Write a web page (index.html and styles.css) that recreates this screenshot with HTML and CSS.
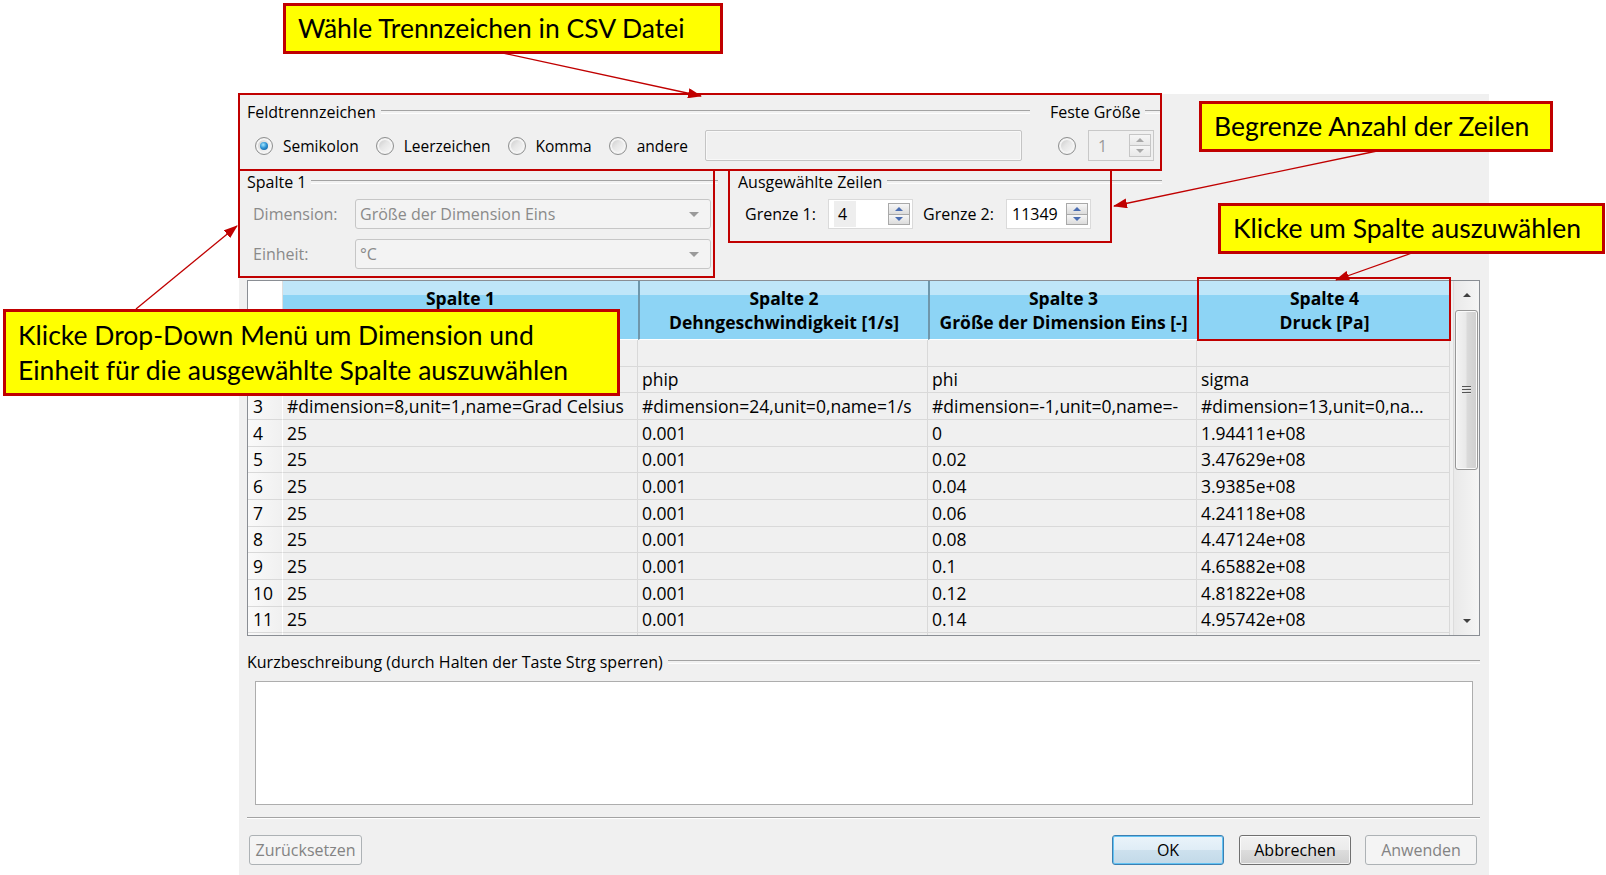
FILE: index.html
```html
<!DOCTYPE html>
<html lang="de">
<head>
<meta charset="utf-8">
<title>CSV Import</title>
<link rel="stylesheet" href="styles.css">
</head>
<body>
<div class="page">
  <div class="dialog">
    <div class="row1">
      <section class="group g-sep">
        <div class="gtitle"><span>Feldtrennzeichen</span></div>
        <div class="gbody">
          <span class="radio-item"><span class="radio checked"></span>Semikolon</span>
          <span class="radio-item"><span class="radio"></span>Leerzeichen</span>
          <span class="radio-item"><span class="radio"></span>Komma</span>
          <span class="radio-item"><span class="radio"></span>andere</span>
          <span class="lineedit"></span>
        </div>
      </section>
      <section class="group g-fixed">
        <div class="gtitle"><span>Feste Größe</span></div>
        <div class="gbody">
          <span class="radio"></span>
          <span class="spin spin-off"><span class="spin-val">1</span><span class="spin-btns"><span class="sbtn"><i class="tri-up"></i></span><span class="sbtn"><i class="tri-down"></i></span></span></span>
        </div>
      </section>
    </div>

    <div class="row2">
      <section class="group g-col">
        <div class="gtitle"><span>Spalte 1</span></div>
        <div class="form-row">
          <span class="flabel">Dimension:</span>
          <span class="combo"><span>Größe der Dimension Eins</span><i class="combo-arrow"></i></span>
        </div>
        <div class="form-row second">
          <span class="flabel">Einheit:</span>
          <span class="combo"><span>°C</span><i class="combo-arrow"></i></span>
        </div>
      </section>
      <section class="group g-rows">
        <div class="gtitle"><span>Ausgewählte Zeilen</span></div>
        <div class="form-row limits">
          <span class="glabel">Grenze 1:</span>
          <span class="spin"><span class="spin-val"><span class="sel">4</span></span><span class="spin-btns"><span class="sbtn"><i class="tri-up"></i></span><span class="sbtn"><i class="tri-down"></i></span></span></span>
          <span class="glabel second">Grenze 2:</span>
          <span class="spin"><span class="spin-val">11349</span><span class="spin-btns"><span class="sbtn"><i class="tri-up"></i></span><span class="sbtn"><i class="tri-down"></i></span></span></span>
        </div>
      </section>
    </div>

    <div class="table">
      <div class="grid">
        <div class="thead">
          <div class="corner"></div>
          <div class="th first"><span>Spalte 1</span><span class="blank"></span></div>
          <div class="th"><span>Spalte 2</span><span>Dehngeschwindigkeit [1/s]</span></div>
          <div class="th"><span>Spalte 3</span><span>Größe der Dimension Eins [-]</span></div>
          <div class="th"><span>Spalte 4</span><span>Druck [Pa]</span></div>
        </div>
        <div class="tbody">
          <div class="rh"></div><div class="td"></div><div class="td"></div><div class="td"></div><div class="td"></div>
          <div class="rh"></div><div class="td"></div><div class="td">phip</div><div class="td">phi</div><div class="td">sigma</div>
          <div class="rh">3</div><div class="td">#dimension=8,unit=1,name=Grad Celsius</div><div class="td">#dimension=24,unit=0,name=1/s</div><div class="td">#dimension=-1,unit=0,name=-</div><div class="td">#dimension=13,unit=0,na...</div>
          <div class="rh">4</div><div class="td">25</div><div class="td">0.001</div><div class="td">0</div><div class="td">1.94411e+08</div>
          <div class="rh">5</div><div class="td">25</div><div class="td">0.001</div><div class="td">0.02</div><div class="td">3.47629e+08</div>
          <div class="rh">6</div><div class="td">25</div><div class="td">0.001</div><div class="td">0.04</div><div class="td">3.9385e+08</div>
          <div class="rh">7</div><div class="td">25</div><div class="td">0.001</div><div class="td">0.06</div><div class="td">4.24118e+08</div>
          <div class="rh">8</div><div class="td">25</div><div class="td">0.001</div><div class="td">0.08</div><div class="td">4.47124e+08</div>
          <div class="rh">9</div><div class="td">25</div><div class="td">0.001</div><div class="td">0.1</div><div class="td">4.65882e+08</div>
          <div class="rh">10</div><div class="td">25</div><div class="td">0.001</div><div class="td">0.12</div><div class="td">4.81822e+08</div>
          <div class="rh">11</div><div class="td">25</div><div class="td">0.001</div><div class="td">0.14</div><div class="td">4.95742e+08</div>
          <div class="rh"></div><div class="td"></div><div class="td"></div><div class="td"></div><div class="td"></div>
        </div>
      </div>
      <div class="vscroll">
        <div class="sb-arrow"><i class="sb-up"></i></div>
        <div class="sb-thumb"><span class="grip"></span></div>
        <div class="sb-fill"></div>
        <div class="sb-arrow"><i class="sb-down"></i></div>
      </div>
    </div>

    <div class="gtitle desc-title"><span>Kurzbeschreibung (durch Halten der Taste Strg sperren)</span></div>
    <div class="textarea"></div>
    <div class="separator"></div>
    <div class="buttons">
      <button class="btn btn-off btn-reset">Zurücksetzen</button>
      <div class="spacer"></div>
      <button class="btn btn-default">OK</button>
      <button class="btn btn-cancel">Abbrechen</button>
      <button class="btn btn-off">Anwenden</button>
    </div>
  </div>

  <svg class="arrows" width="1606" height="875" viewBox="0 0 1606 875">
    <defs>
      <marker id="ah" markerUnits="userSpaceOnUse" markerWidth="14" markerHeight="10" refX="13" refY="5" orient="auto">
        <path d="M0,0 L14,5 L0,10 z" fill="#c00000"/>
      </marker>
    </defs>
    <line x1="503" y1="53" x2="701" y2="96" class="arrow-line" marker-end="url(#ah)"/>
    <line x1="1377" y1="151" x2="1114" y2="206" class="arrow-line" marker-end="url(#ah)"/>
    <line x1="1412" y1="253" x2="1336" y2="280" class="arrow-line" marker-end="url(#ah)"/>
    <line x1="136" y1="309" x2="237" y2="226" class="arrow-line" marker-end="url(#ah)"/>
  </svg>

  <div class="hl hl-a"></div>
  <div class="hl hl-b"></div>
  <div class="hl hl-c"></div>
  <div class="hl hl-d"></div>

  <div class="callout c1">Wähle Trennzeichen in CSV Datei</div>
  <div class="callout c2">Begrenze Anzahl der Zeilen</div>
  <div class="callout c3">Klicke um Spalte auszuwählen</div>
  <div class="callout c4">Klicke Drop-Down Menü um Dimension und<br>Einheit für die ausgewählte Spalte auszuwählen</div>
</div>
</body>
</html>
```

FILE: styles.css
```css
* { box-sizing: border-box; }
html, body { margin: 0; padding: 0; }
body {
  background: #fff;
  font-family: "Open Sans", "Noto Sans", sans-serif;
  font-size: 16px;
  color: #000;
}
.page {
  position: relative;
  width: 1606px;
  height: 875px;
  overflow: hidden;
  padding: 94px 0 0 239px;
}
.dialog {
  width: 1250px;
  height: 781px;
  background: #f0f0f0;
  padding: 8px 9px 0 8px;
  display: flex;
  flex-direction: column;
}

/* group boxes */
.gtitle {
  display: flex;
  align-items: center;
  height: 20px;
  line-height: 20px;
  white-space: nowrap;
}
.gtitle::after {
  content: "";
  flex: 1;
  height: 2px;
  margin-left: 5px;
  border-top: 1px solid #a3a3a3;
  border-bottom: 1px solid #fdfdfd;
}
.row1 { display: flex; gap: 20px; }
.g-sep { width: 783px; }
.g-fixed { width: 112px; }
.gbody {
  display: flex;
  align-items: center;
  height: 31px;
  margin-top: 8px;
  padding: 0 8px;
}
.radio-item {
  display: flex;
  align-items: center;
  gap: 10px;
  margin-right: 17px;
  white-space: nowrap;
  font-size: 15.5px;
}
.radio {
  flex: none;
  width: 18px;
  height: 18px;
  border-radius: 50%;
  border: 1px solid #8e8f8f;
  background: linear-gradient(135deg, #c4c4c4 0%, #e6e6e6 45%, #fbfbfb 100%);
  box-shadow: inset 0 0 0 2px #f4f4f4;
  display: flex;
  align-items: center;
  justify-content: center;
}
.radio.checked::after {
  content: "";
  width: 8px;
  height: 8px;
  border-radius: 50%;
  background: radial-gradient(circle at 40% 35%, #a6e8ff 0%, #2f95d6 45%, #0b4f8f 100%);
}
.g-fixed .radio { margin-right: 12px; }
.lineedit {
  flex: 1;
  height: 31px;
  border: 1px solid #c4c4c4;
  border-radius: 2px;
  background: #f0f0f0;
  box-shadow: inset 0 0 0 1px #f8f8f8;
}

/* spin boxes */
.spin {
  flex: none;
  display: flex;
  width: 85px;
  height: 30px;
  border: 1px solid #dadada;
  background: #fff;
}
.spin-val {
  flex: 1;
  display: flex;
  align-items: center;
  padding-left: 5px;
}
.spin-val .sel {
  background: #eeeeee;
  padding: 2px 9px 2px 4px;
}
.spin-btns {
  width: 22px;
  display: flex;
  flex-direction: column;
  margin: 3px 2px 3px 0;
}
.sbtn {
  flex: 1;
  display: flex;
  align-items: center;
  justify-content: center;
  border: 1px solid #a9a9a9;
  background: linear-gradient(#f7f7f7, #dcdcdc);
}
.sbtn + .sbtn { border-top: none; }
.tri-up {
  width: 0; height: 0;
  border-left: 4px solid transparent;
  border-right: 4px solid transparent;
  border-bottom: 4px solid #4a6db1;
}
.tri-down {
  width: 0; height: 0;
  border-left: 4px solid transparent;
  border-right: 4px solid transparent;
  border-top: 4px solid #4a6db1;
}
.spin-off {
  width: 66px;
  height: 31px;
  background: #f0f0f0;
  border-color: #c8c8c8;
  color: #9a9a9a;
}
.spin-off .spin-val { padding-left: 9px; }
.spin-off .sbtn { border-color: #c6c6c6; background: linear-gradient(#f6f6f6, #e8e8e8); }
.spin-off .tri-up { border-bottom-color: #a8a8a8; }
.spin-off .tri-down { border-top-color: #a8a8a8; }

/* row 2 */
.row2 { display: flex; gap: 20px; margin-top: 11px; }
.g-col { width: 471px; }
.g-rows { width: 424px; }
.form-row {
  display: flex;
  align-items: center;
  height: 30px;
  margin-top: 7px;
}
.form-row.second { margin-top: 10px; }
.g-col .form-row { padding: 0 7px 0 6px; }
.flabel { width: 102px; color: #8a8a8a; flex: none; }
.combo {
  flex: 1;
  height: 30px;
  display: flex;
  align-items: center;
  padding-left: 4px;
  border: 1px solid #c6c6c6;
  border-radius: 3px;
  background: #f3f3f3;
  color: #8a8a8a;
  white-space: nowrap;
}
.combo-arrow {
  margin-left: auto;
  margin-right: 11px;
  width: 0; height: 0;
  border-left: 5px solid transparent;
  border-right: 5px solid transparent;
  border-top: 5px solid #9a9a9a;
}
.limits { padding-left: 7px; }
.glabel { width: 83px; flex: none; }
.glabel.second { margin-left: 10px; }

/* table */
.table {
  margin-top: 11px;
  height: 356px;
  border: 1px solid #8a8e94;
  display: flex;
  background: #f0f0f0;
  font-size: 17.5px;
}
.grid { width: 1202px; display: flex; flex-direction: column; }
.thead, .tbody {
  display: grid;
  grid-template-columns: 35px 355px 290px 269px 253px;
}
.thead { height: 59px; }
.corner {
  background: #fff;
  border-right: 1px solid #dedede;
  border-bottom: 1px solid #dedede;
}
.th {
  background: linear-gradient(#bfe6f9 0, #bfe6f9 14px, #8dd4f5 14px, #8dd4f5 100%);
  border-left: 2px solid #6f97ab;
  border-bottom: 1px solid #fff;
  display: flex;
  flex-direction: column;
  justify-content: center;
  align-items: center;
  font-weight: 700;
  line-height: 24px;
  white-space: nowrap;
  overflow: hidden;
}
.th .blank { height: 24px; }
.th.first { border-left: none; }
.tbody {
  height: 295px;
  overflow: hidden;
  grid-auto-rows: 26.667px;
  align-content: start;
}
.td, .rh {
  display: flex;
  align-items: center;
  white-space: nowrap;
  overflow: hidden;
  border-bottom: 1px solid #d9d9d9;
}
.td { border-right: 1px solid #d9d9d9; padding-left: 4px; }
.rh {
  padding-left: 5px;
  background: linear-gradient(90deg, #fafafa, #f0f0f0);
  border-right: 1px solid #fff;
}

/* scrollbar */
.vscroll {
  margin-left: 3px;
  width: 26px;
  display: flex;
  flex-direction: column;
  border-left: 1px solid #dcdcdc;
  background: linear-gradient(90deg, #e9e9e9, #f5f5f5);
}
.sb-arrow {
  height: 28px;
  display: flex;
  align-items: center;
  justify-content: center;
}
.sb-up {
  width: 0; height: 0;
  border-left: 4px solid transparent;
  border-right: 4px solid transparent;
  border-bottom: 4px solid #404040;
}
.sb-down {
  width: 0; height: 0;
  border-left: 4px solid transparent;
  border-right: 4px solid transparent;
  border-top: 4px solid #404040;
}
.sb-thumb {
  height: 160px;
  margin: 1px 1px 0 1px;
  border: 1px solid #979797;
  border-radius: 3px;
  background: linear-gradient(90deg, #f3f3f3, #e9e9e9 45%, #d9d9d9 55%, #cfcfcf);
  box-shadow: inset 0 0 0 1px #fafafa;
  display: flex;
  align-items: center;
  justify-content: center;
}
.grip {
  width: 9px;
  height: 9px;
  background: repeating-linear-gradient(#555 0, #555 1px, #e8e8e8 1px, #e8e8e8 2px, transparent 2px, transparent 3px);
}
.sb-fill { flex: 1; }

/* description */
.desc-title { margin-top: 16px; }
.textarea {
  margin: 9px 7px 0 8px;
  height: 124px;
  background: #fff;
  border: 1px solid #adadad;
}
.separator {
  margin-top: 12px;
  height: 2px;
  border-top: 1px solid #a3a3a3;
  border-bottom: 1px solid #fff;
}
.buttons {
  margin-top: 16px;
  display: flex;
  height: 30px;
  padding: 0 3px 0 2px;
}
.spacer { flex: 1; }
.btn {
  width: 112px;
  height: 30px;
  padding: 0;
  font: inherit;
  color: #000;
  border: 1px solid #707070;
  border-radius: 3px;
  background: linear-gradient(#f2f2f2 0%, #ebebeb 50%, #dddddd 50%, #cfcfcf 100%);
  box-shadow: inset 0 0 0 1px rgba(255, 255, 255, 0.75);
}
.btn-reset { width: 113px; }
.btn-default {
  border-color: #3c7fb1;
  background: linear-gradient(#eaf4fa 0%, #dfedf6 50%, #cde1ee 50%, #c2d9e8 100%);
  box-shadow: inset 0 0 0 1px #62c3f4;
}
.btn-cancel { margin-left: 15px; margin-right: 14px; }
.btn-off {
  border-color: #adb2b5;
  background: #f4f4f4;
  color: #838383;
  box-shadow: none;
}

/* annotations */
.arrows {
  position: absolute;
  left: 0;
  top: 0;
  pointer-events: none;
}
.arrow-line { stroke: #c00000; stroke-width: 1.3; }
.hl {
  position: absolute;
  border: 2px solid #c00000;
}
.hl-a { left: 238px; top: 93px; width: 924px; height: 78px; }
.hl-b { left: 238px; top: 169px; width: 477px; height: 109px; }
.hl-c { left: 728px; top: 169px; width: 384px; height: 74px; }
.hl-d { left: 1197px; top: 277px; width: 254px; height: 64px; }
.callout {
  position: absolute;
  background: #ffff00;
  border: 3px solid #c00000;
  font-family: Lato, "Open Sans", sans-serif;
  font-size: 26.5px;
  line-height: 35px;
  color: #000;
  display: flex;
  align-items: center;
  white-space: nowrap;
  padding-left: 12px;
}
.c1 { left: 283px; top: 3px; width: 440px; height: 51px; }
.c2 { left: 1199px; top: 101px; width: 354px; height: 51px; }
.c3 { left: 1218px; top: 203px; width: 387px; height: 51px; }
.c4 { left: 3px; top: 309px; width: 617px; height: 87px; }
```
